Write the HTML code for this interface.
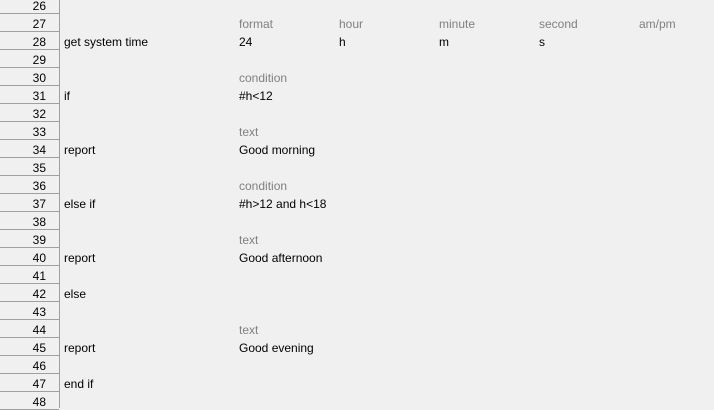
<!DOCTYPE html>
<html><head><style>
body{margin:0;width:714px;height:408px;overflow:hidden;background:#f0f0f0;font-family:"Liberation Sans","DejaVu Sans",sans-serif;font-size:12px;position:relative}
.g{position:absolute;left:0;top:0;width:59px;height:408px;border-right:1px solid #a0a0a0;background:#f0f0f0}
.r{position:absolute;left:0;width:59px;height:17px;border-bottom:1px solid #a0a0a0;text-align:right;box-sizing:content-box}
.r span{position:absolute;right:13px;top:3px;color:#000}
.t{position:absolute;color:#000;line-height:14px}
.l{color:#808080}
</style></head><body>
<div class="g"></div>
<div id="rows"></div>
<script>
var h='';for(var i=26;i<=48;i++){var y=-4+(i-26)*18;h+='<div class="r" style="top:'+y+'px"><span>'+i+'</span></div>';}
document.getElementById('rows').innerHTML=h;
function T(row,x,txt,c){var y=-4+(row-26)*18+3;document.write('<div class="t '+(c||'')+'" style="top:'+y+'px;left:'+x+'px">'+txt+'</div>');}
T(27,239,'format','l');T(27,339,'hour','l');T(27,439,'minute','l');T(27,539,'second','l');T(27,639,'am/pm','l');
T(28,64,'get system time');T(28,239,'24');T(28,339,'h');T(28,439,'m');T(28,539,'s');
T(30,239,'condition','l');T(31,64,'if');T(31,239,'#h&lt;12');
T(33,239,'text','l');T(34,64,'report');T(34,239,'Good morning');
T(36,239,'condition','l');T(37,64,'else if');T(37,239,'#h&gt;12 and h&lt;18');
T(39,239,'text','l');T(40,64,'report');T(40,239,'Good afternoon');
T(42,64,'else');
T(44,239,'text','l');T(45,64,'report');T(45,239,'Good evening');
T(47,64,'end if');
</script>
</body></html>
